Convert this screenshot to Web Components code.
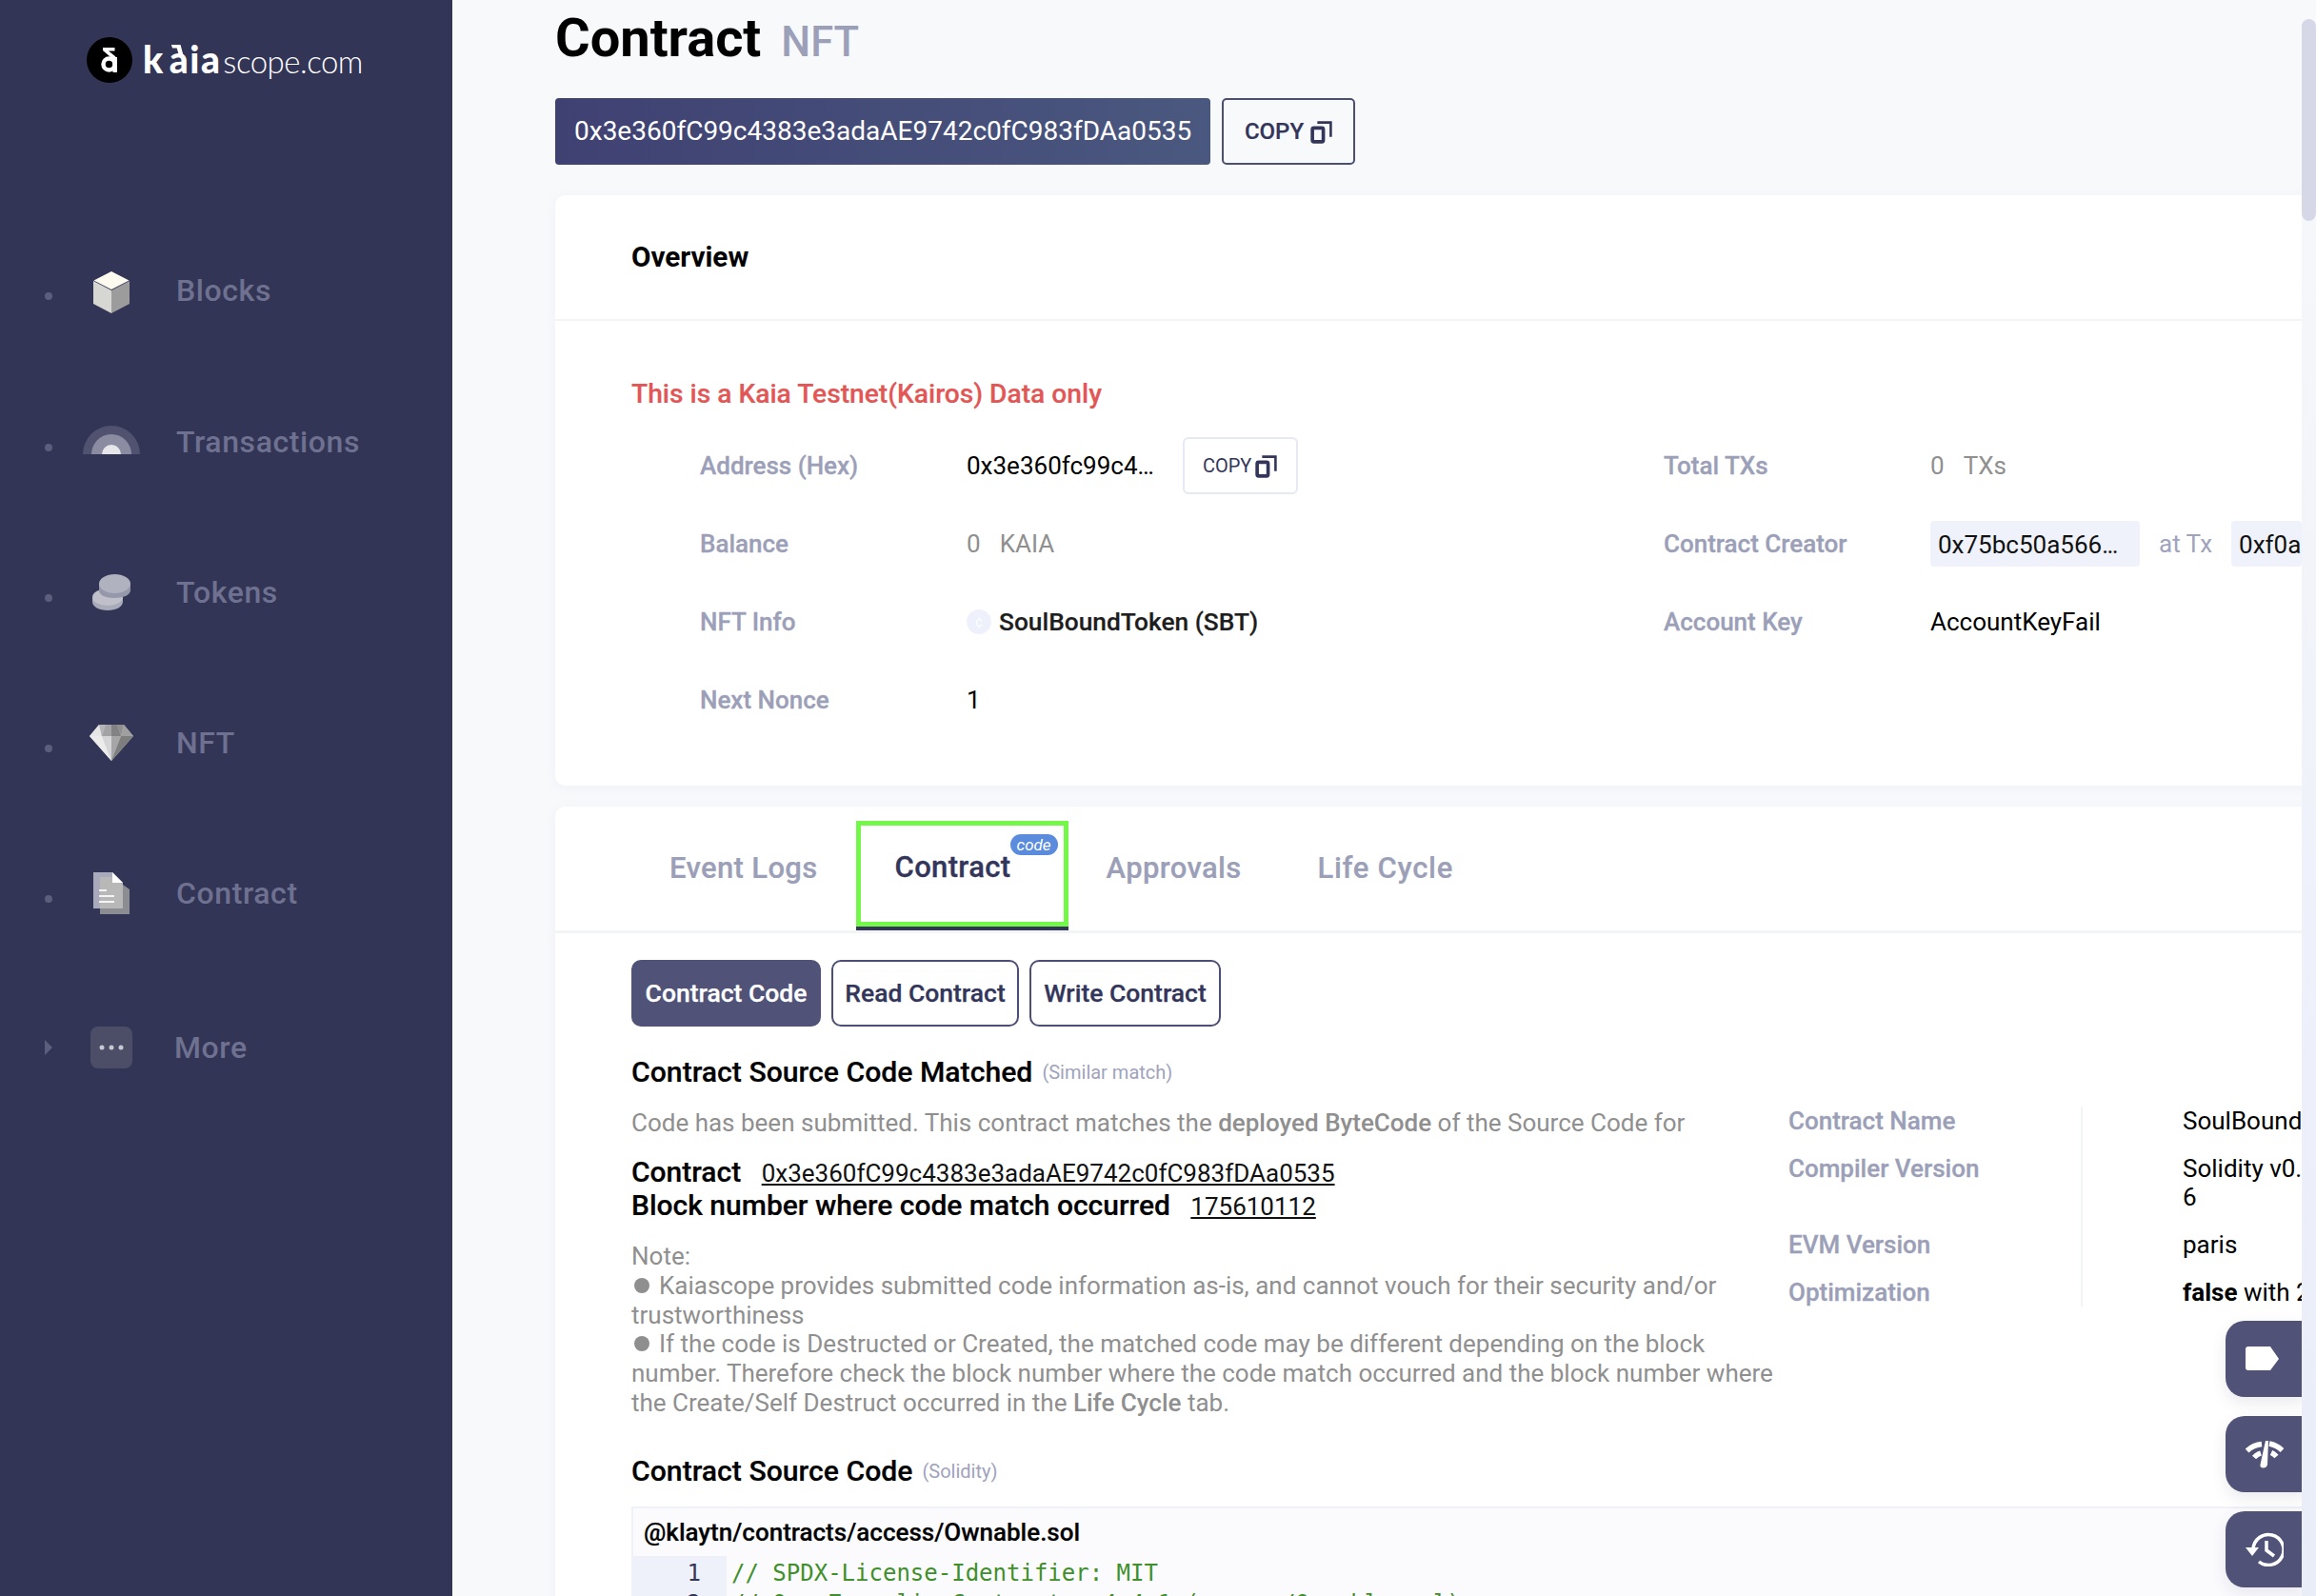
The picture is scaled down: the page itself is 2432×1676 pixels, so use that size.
<!DOCTYPE html>
<html><head><meta charset="utf-8"><title>Contract</title>
<style>
html,body{margin:0;padding:0;height:100%;overflow:hidden;background:#f8f9fb;font-family:Roboto,"Liberation Sans",sans-serif}
</style></head><body>
<kaia-app>
  <kaia-sidenav slot="nav"></kaia-sidenav>
  <kaia-main slot="main"></kaia-main>
</kaia-app>
<script>
function def(name, html, setup){
  customElements.define(name, class extends HTMLElement{
    constructor(){super();this.attachShadow({mode:'open'}).innerHTML=typeof html==='function'?html(this):html;}
    connectedCallback(){ if(typeof html==='function'){this.shadowRoot.innerHTML=html(this);} if(setup)setup(this);}
  });
}
const copyIcon=(w,h)=>`<svg width="${w}" height="${h}" viewBox="0 0 22 24" fill="none" stroke="#33365a" stroke-width="3.500"><rect x="2" y="8" width="11" height="14" rx="1.500"/><path d="M7 2.500h13.500V17" stroke-width="2.500"/></svg>`;
const ICONS={
cube:`<svg width="40" height="44" viewBox="0 0 40 44"><path d="M20 0L38.500 9.500 20 19 1.500 9.500z" fill="#fdfbef"/><path d="M1 10L20 20v24L1 34z" fill="#d6d6d2"/><path d="M39 10L20 20v24l19-10z" fill="#9c9c9c"/></svg>`,
tx:`<svg width="60" height="30" viewBox="0 0 60 30"><path d="M0 30a30 30 0 0 1 60 0z" fill="#50526f"/><path d="M9 30a21 21 0 0 1 42 0z" fill="#8b8ca2"/><path d="M20 30a10 10 0 0 1 20 0z" fill="#e6e6ea"/></svg>`,
tok:`<svg width="42" height="38" viewBox="0 0 42 38"><path d="M1 24v5c0 5 7 9 16 9s16-4 16-9v-5z" fill="#a9abb9"/><ellipse cx="17" cy="24" rx="16" ry="9" fill="#bfc0ca"/><path d="M8 10v7c0 5 7 8 16 8s17-3 17-8v-7z" fill="#9597aa"/><ellipse cx="24.500" cy="10" rx="16.500" ry="10" fill="#b0b2c0"/></svg>`,
nft:`<svg width="46" height="38" viewBox="0 0 46 38"><path d="M10 0h26l10 12-23 26L0 12z" fill="#c9c9cb"/><path d="M10 0L0 12h13z" fill="#e6e6e6"/><path d="M36 0l10 12H33z" fill="#a0a0a0"/><path d="M10 0l3 12L17 0z" fill="#b5b5b7"/><path d="M36 0l-3 12L29 0z" fill="#8f8f90"/><path d="M17 0h12l4 12H13z" fill="#a3a3a5"/><path d="M23 0h6l4 12H23z" fill="#828284"/><path d="M13 12h10v26z" fill="#d5d5d7"/><path d="M33 12H23v26z" fill="#a6a6a8"/><path d="M33 12h13L23 38z" fill="#7e7e7e"/><path d="M0 12h13l10 26z" fill="#ececec"/></svg>`,
doc:`<svg width="38" height="44" viewBox="0 0 38 44"><path d="M0 0h20l11 11v27H0z" fill="#a9aabb"/><path d="M7 5h13l18 13v26H7z" fill="#8c8d92"/><path d="M7 5h14l10 7v26H7z" fill="#b8b8b8"/><path d="M20 0l11 11H20z" fill="#fff"/><path d="M6 18h8v2H6zM6 24h16v2H6zM6 30h16v2H6z" fill="#f4f4f4"/></svg>`
};
def('kaia-app',`<style>:host{display:flex;width:2432px;height:1676px;overflow:hidden}
.m{flex:1;min-width:0;overflow:hidden;position:relative}
.s{width:15px;flex:none;background:linear-gradient(180deg,#f8f9fb 0,#f6f7fa 240px,#edf0fa 1100px,#e9edf7 100%);padding-top:20px;box-sizing:border-box}
.s i{display:block;width:15px;height:212px;background:#d6d8e8;border-radius:8px}
</style><slot name="nav"></slot><div class="m"><slot name="main"></slot></div><div class="s"><i></i></div>`);
def('kaia-navitem',(t)=>{const more=t.hasAttribute('more');return `<style>:host{display:block;position:absolute;left:0;width:100%;height:60px}
.row{display:flex;align-items:center;height:60px;color:#6f7190;font:500 32px/1 Roboto,sans-serif;letter-spacing:.6px}
.mark{width:8px;height:8px;border-radius:50%;background:#5c5e7c;margin-left:47px;flex:none;position:relative;top:6px}
.mark.tri{width:0;height:0;border-radius:0;background:none;border-left:8px solid #5c5e7c;border-top:8px solid transparent;border-bottom:8px solid transparent;top:0}
.ic{width:88px;margin-left:32px;flex:none;display:flex}
.ic>div{width:60px;display:flex;justify-content:center;align-items:center;position:relative;top:${t.getAttribute('dy')||0}px}
.lbl{margin-left:${more?8:10}px}
</style><div class="row"><span class="mark ${more?'tri':''}"></span><span class="ic"><div>${t.getAttribute('ic')==='more'?'<svg width="44" height="44" viewBox="0 0 44 44"><rect width="44" height="44" rx="8" fill="#4c4e68"/><circle cx="12" cy="22" r="2.500" fill="#c8c8d2"/><circle cx="22" cy="22" r="2.500" fill="#c8c8d2"/><circle cx="32" cy="22" r="2.500" fill="#c8c8d2"/></svg>':ICONS[t.getAttribute('ic')]}</div></span><span class="lbl">${t.getAttribute('label')}</span></div>`},
 (t)=>{t.style.top=t.getAttribute('y')+'px'});
def('kaia-logo',`<style>:host{display:flex;align-items:center;position:absolute;left:91px;top:39px;color:#fff}
.c{width:48px;height:48px;border-radius:50%;background:#000;display:flex;align-items:center;justify-content:center;flex:none;margin-right:11px}
.k{font:900 39px/48px Lato,sans-serif;letter-spacing:1.500px;position:relative;top:-1px}
.k em{font-style:normal;position:relative;margin-left:5px}
.k em::before{content:"";position:absolute;left:2px;top:8px;width:13px;height:12px;background:#fff;clip-path:polygon(0 0,75% 0,100% 100%,65% 100%,45% 30%,10% 30%)}
.s{font:300 33px/48px Lato,sans-serif;margin-left:2px;letter-spacing:-.5px;position:relative;top:1px}
</style><span class="c"><svg width="18" height="26" viewBox="0 0 18 26"><path d="M2 0h12.500v3.500H8l7.500 6-2.500 3L2 3z" fill="#fff"/><circle cx="8.500" cy="17.500" r="6" fill="none" stroke="#fff" stroke-width="4.500"/><rect x="12.500" y="10" width="4.500" height="16" fill="#fff"/></svg></span><span class="k">k<em>a</em>ia</span><span class="s">scope.com</span>`);
def('kaia-sidenav',`<style>:host{display:block;width:475px;flex:none;height:100%;background:#333556;position:relative}</style>
<kaia-logo></kaia-logo>
<kaia-navitem y="275" dy="2" ic="cube" label="Blocks"></kaia-navitem>
<kaia-navitem y="434" dy="-2" ic="tx" label="Transactions"></kaia-navitem>
<kaia-navitem y="592" ic="tok" label="Tokens"></kaia-navitem>
<kaia-navitem y="750" ic="nft" label="NFT"></kaia-navitem>
<kaia-navitem y="908" ic="doc" label="Contract"></kaia-navitem>
<kaia-navitem y="1070" ic="more" more label="More"></kaia-navitem>`);
def('kaia-title',`<style>:host{display:block;color:#000}
h1{margin:0;height:103px;padding-top:12px;box-sizing:border-box;font:700 56px/56px Roboto,sans-serif;display:flex;align-items:baseline}
h1 small{font:500 43.500px/1 Roboto,sans-serif;color:#9c9fb8;margin-left:21px}
.r{display:flex;gap:12px;height:70px}
.a{width:688px;box-sizing:border-box;height:70px;border-radius:4px;background:linear-gradient(90deg,#3f4172,#4a587f);color:#fff;font:400 28px/70px Roboto,sans-serif;padding-left:20px;white-space:nowrap}
.b{width:140px;height:70px;box-sizing:border-box;border:2px solid #4c4f75;border-radius:5px;display:flex;align-items:center;justify-content:center;gap:7px;color:#33365a;font:500 24px/1 Roboto,sans-serif;-webkit-text-stroke:.2px #33365a}
</style><h1>Contract<small>NFT</small></h1><div class="r"><div class="a">0x3e360fC99c4383e3adaAE9742c0fC983fDAa0535</div><div class="b">COPY ${copyIcon(23,25)}</div></div>`);
def('kaia-card',`<style>:host{display:block;background:#fff;border-radius:10px 0 0 10px;box-shadow:0 2px 12px rgba(120,130,170,.07);width:1900px}</style><slot></slot>`);
def('kaia-row',`<style>:host{display:flex;align-items:center;height:82px;font:400 26px/1 Roboto,sans-serif;color:#000;width:100%}
.l{width:280px;flex:none;font-weight:500;color:#9c9fb8;-webkit-text-stroke:.3px #9c9fb8}.v{display:flex;align-items:center;white-space:nowrap}</style><span class="l"><slot name="l"></slot></span><span class="v"><slot></slot></span>`);
def('kaia-copymini',`<style>:host{display:inline-flex;align-items:center;justify-content:center;gap:4px;box-sizing:border-box;width:121px;height:60px;border:2px solid #e6e9f3;border-radius:6px;color:#33365a;font:400 20px/1 Roboto,sans-serif;margin-left:31px}</style>COPY ${copyIcon(23,25)}`);
def('kaia-chip',`<style>:host{display:inline-block;box-sizing:border-box;width:var(--w,220px);flex:none;overflow:hidden;height:48px;padding:0 8px;background:#eff2fa;border-radius:4px;color:#111;font:400 26px/50px Roboto,sans-serif;white-space:nowrap}</style><slot></slot>`);
def('kaia-overview',`<style>:host{display:block}
.h{height:130px;border-bottom:2px solid #f3f4f6;padding-left:80px;display:flex;align-items:center;font:700 29.700px/1 Roboto,sans-serif;color:#000}
.b{height:488px;padding-left:80px;box-sizing:border-box}
.warn{padding-top:55px;height:60px;color:#e25656;font:500 28.200px/44px Roboto,sans-serif;-webkit-text-stroke:.2px #e25656}
.g{display:grid;grid-template-columns:1012px 1fr;padding:0 0 0 72px;margin-top:-4px}
.g>div{min-width:0}
.gray{color:#8f8f8f}.sp{margin-left:20px}
.at{color:#a0a3bd;margin:0 20px}
.e{letter-spacing:-1.500px}
.tok{width:26px;height:26px;border-radius:50%;background:#eef1fb;margin-right:8px;display:inline-flex;align-items:center;justify-content:center;color:#fff;font-size:14px}
.n{font-weight:500;color:#1e1e1e;font-size:26.300px;-webkit-text-stroke:.2px #1e1e1e}
</style><div class="h">Overview</div><div class="b"><div class="warn">This is a Kaia Testnet(Kairos) Data only</div>
<div class="g"><div>
<kaia-row><span slot="l">Address (Hex)</span><span>0x3e360fc99c4<span class="e">...</span></span><kaia-copymini></kaia-copymini></kaia-row>
<kaia-row><span slot="l">Balance</span><span class="gray">0<span class="sp">KAIA</span></span></kaia-row>
<kaia-row><span slot="l">NFT Info</span><span class="tok">¢</span><span class="n">SoulBoundToken (SBT)</span></kaia-row>
<kaia-row><span slot="l">Next Nonce</span><span>1</span></kaia-row>
</div><div>
<kaia-row><span slot="l">Total TXs</span><span class="gray">0<span class="sp">TXs</span></span></kaia-row>
<kaia-row><span slot="l">Contract Creator</span><kaia-chip>0x75bc50a566<span class="e">...</span></kaia-chip><span class="at">at Tx</span><kaia-chip style="--w:74px">0xf0a</kaia-chip></kaia-row>
<kaia-row><span slot="l">Account Key</span><span>AccountKeyFail</span></kaia-row>
</div></div></div>`);
def('kaia-tabs',`<style>:host{display:flex;height:130px;border-bottom:3px solid #f3f4f6;padding-left:80px;font:500 31px/1 Roboto,sans-serif;color:#9c9fb8;letter-spacing:.35px;-webkit-text-stroke:.2px #9c9fb8}
.t{padding:0 40px 2px;display:flex;align-items:center;height:130px;box-sizing:border-box}
.on{color:#33365a;-webkit-text-stroke:.3px #33365a;width:223px;padding:28px 0 0 36px;align-items:flex-start;border:5px solid #73f84a;height:111px;margin-top:15px;box-shadow:0 4px 0 #33365a;position:relative}
.bd{position:absolute;left:157px;top:9px;width:50px;height:22px;border-radius:11px;background:#5b8bdd;color:#fff;font:italic 400 17px/22px Roboto,sans-serif;text-align:center;letter-spacing:0;-webkit-text-stroke:0}
</style><div class="t">Event Logs</div><div class="t on">Contract<span class="bd">code</span></div><div class="t">Approvals</div><div class="t" style="letter-spacing:.7px">Life Cycle</div>`);
def('kaia-subtabs',`<style>:host{display:flex;gap:11px;font:500 26.500px/1 Roboto,sans-serif;-webkit-text-stroke:.25px}
.b{height:70px;box-sizing:border-box;border:2px solid #4c4f75;border-radius:10px;display:flex;align-items:center;justify-content:center;color:#33365a}
.a{background:#505277;border-color:#505277;color:#fff}
</style><div class="b a" style="width:199px">Contract Code</div><div class="b" style="width:197px">Read Contract</div><div class="b" style="width:201px">Write Contract</div>`);
def('kaia-head',`<style>:host{display:flex;align-items:center;font:500 30.200px/1 Roboto,sans-serif;color:#000;-webkit-text-stroke:.2px #000}
small{font:400 20px/1 Roboto,sans-serif;color:#a0a3bd;margin-left:10px;position:relative;top:0;-webkit-text-stroke:0}</style><slot></slot><small><slot name="s"></slot></small>`);
def('kaia-infotable',`<style>:host{display:block;font:400 26px/30px Roboto,sans-serif;color:#000;width:900px;flex:none;white-space:nowrap}
.t{display:grid;grid-template-columns:307px 1fr;row-gap:20px}
.l{font-weight:500;color:#9c9fb8;-webkit-text-stroke:.3px #9c9fb8}
.v{padding-left:105px;border-left:2px solid #f3f4f6;margin-top:-20px;padding-top:20px}
.t>.v:nth-child(2){margin-top:0;padding-top:0}
b{font-weight:700}</style>
<div class="t"><div class="l">Contract Name</div><div class="v">SoulBoundToken</div>
<div class="l">Compiler Version</div><div class="v">Solidity v0.<br>6</div>
<div class="l">EVM Version</div><div class="v">paris</div>
<div class="l">Optimization</div><div class="v"><b>false</b> with 200 runs</div></div>`);
def('kaia-codebox',`<style>:host{display:block;border:2px solid #eef1f8;background:#fbfbfe;width:1900px;height:200px}
.f{height:50px;padding-left:11px;font:500 26px/50px Roboto,sans-serif;color:#000;-webkit-text-stroke:.2px #000}
.r{display:flex;font:400 24px/36px "DejaVu Sans Mono",monospace;color:#3f8f2a;height:32px}
.r span{width:98px;flex:none;background:#eef1fa;color:#33365a;text-align:right;padding-right:27px;box-sizing:border-box}
.r code{font:inherit;padding-left:5px}
</style><div class="f">@klaytn/contracts/access/Ownable.sol</div>
<div class="r"><span>1</span><code>// SPDX-License-Identifier: MIT</code></div>
<div class="r"><span>2</span><code>// OpenZeppelin Contracts v4.4.1 (access/Ownable.sol)</code></div>`);
def('kaia-contract',`<style>:host{display:block;padding:28px 0 0 80px}
.cols{display:flex;margin-top:20px}
.txt{width:1215px;flex:none;font:400 26px/30.800px Roboto,sans-serif;color:#8f8f8f}
.txt b{font-weight:500}
.p1{line-height:32px;padding-top:1px}
.cl{margin-top:19px;color:#000;font:500 30px/34px Roboto,sans-serif;-webkit-text-stroke:.2px #000}
.cl a{font:400 26px/34px Roboto,sans-serif;color:#111;text-decoration:underline;margin-left:14px;-webkit-text-stroke:0}
.nt{margin-top:20px}
.d{display:inline-block;width:16px;height:16px;border-radius:50%;background:#8f8f8f;margin:0 10px 0 3px;position:relative;top:-1px}
</style><kaia-subtabs></kaia-subtabs>
<kaia-head style="height:32px;margin-top:32px">Contract Source Code Matched<span slot="s">(Similar match)</span></kaia-head>
<div class="cols"><div class="txt"><div class="p1">Code has been submitted. This contract matches the <b>deployed ByteCode</b> of the Source Code for</div>
<div class="cl">Contract <a>0x3e360fC99c4383e3adaAE9742c0fC983fDAa0535</a><br>Block number where code match occurred <a>175610112</a></div>
<div class="nt">Note:<br><span class="d"></span>Kaiascope provides submitted code information as-is, and cannot vouch for their security and/or<br>trustworthiness<br><span class="d"></span>If the code is Destructed or Created, the matched code may be different depending on the block<br>number. Therefore check the block number where the code match occurred and the block number where<br>the Create/Self Destruct occurred in the <b>Life Cycle</b> tab.</div>
</div><kaia-infotable></kaia-infotable></div>
<kaia-head style="height:32px;margin-top:40px">Contract Source Code<span slot="s">(Solidity)</span></kaia-head>
<kaia-codebox style="margin-top:21px"></kaia-codebox>`);
def('kaia-float',`<style>:host{position:absolute;right:-4px;top:1387px;display:flex;flex-direction:column;gap:20px}
.b{width:84px;height:80px;border-radius:20px 0 0 20px;background:#505277;display:flex;align-items:center;box-shadow:0 6px 16px rgba(80,82,119,.12)}
.b svg{margin-left:21px}</style>
<div class="b"><svg width="36" height="26" viewBox="0 0 36 26"><path d="M3 0h23l9 13-9 12H3a3 3 0 0 1-3-3V3a3 3 0 0 1 3-3z" fill="#fff"/></svg></div>
<div class="b"><svg width="40" height="30" viewBox="0 0 40 30" fill="none" stroke="#fff"><path d="M1.500 11.500A27 27 0 0 1 17 4.500M25 4A27 27 0 0 1 38.500 11" stroke-width="5.500"/><path d="M9 18.500a16 16 0 0 1 7-4.500M27 13.500a16 16 0 0 1 5.500 4" stroke-width="5.500"/><path d="M18.500 29.500q-3.500 0-3-3.500L21 1l3 0 -1 25q-1 3.500-4.500 3.500z" fill="#fff" stroke="none"/></svg></div>
<div class="b"><svg width="40" height="36" viewBox="0 0 40 36" fill="none" stroke="#fff" stroke-width="3.500"><path d="M8 18A16 16 0 1 1 14 31"/><path d="M0 16h14l-7 9z" fill="#fff" stroke="none"/><path d="M22 9v10l8 6"/></svg></div>`);
def('kaia-main',`<style>:host{display:block;height:100%;padding-left:108px;position:relative;overflow:hidden;background:#f8f9fb}
kaia-title{height:205px}
.c2{margin-top:22px;height:1000px}</style>
<kaia-title></kaia-title>
<kaia-card><kaia-overview></kaia-overview></kaia-card>
<kaia-card class="c2"><kaia-tabs></kaia-tabs><kaia-contract></kaia-contract></kaia-card>
<kaia-float></kaia-float>`);
</script>
</body></html>
